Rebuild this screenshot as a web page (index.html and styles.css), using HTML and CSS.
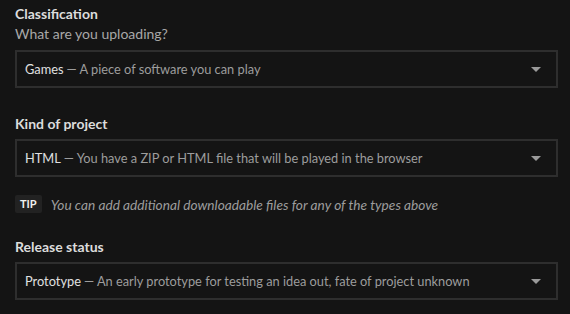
FILE: index.html
```html
<!DOCTYPE html>
<html>

<head>
    <meta name="viewport" content="width=device-width, initial-scale=1">
    <title>Upload project</title>
    <link rel="stylesheet" href="styles.css">
</head>

<body>
    <form class="project_form">
        <div class="input_row">
            <div class="label">Classification</div>
            <div class="sub">What are you uploading?</div>
            <div class="select_box">
                <span class="value">Games</span>
                <span class="desc">— A piece of software you can play</span>
                <span class="arrow"></span>
            </div>
        </div>

        <div class="input_row">
            <div class="label">Kind of project</div>
            <div class="select_box">
                <span class="value">HTML</span>
                <span class="desc">— You have a ZIP or HTML file that will be played in the browser</span>
                <span class="arrow"></span>
            </div>
        </div>

        <p class="tip">
            <span class="tip_badge">TIP</span>
            <em>You can add additional downloadable files for any of the types above</em>
        </p>

        <div class="input_row">
            <div class="label">Release status</div>
            <div class="select_box">
                <span class="value">Prototype</span>
                <span class="desc">— An early prototype for testing an idea out, fate of project unknown</span>
                <span class="arrow"></span>
            </div>
        </div>
    </form>
</body>

</html>
```

FILE: styles.css
```css
body {
    margin: 0;
    background-color: #141414;
    font-family: Lato, 'Noto Sans', sans-serif;
    color: #dadada;
}

.project_form {
    display: flex;
    flex-direction: column;
    padding: 4px 12px 0 15px;
}

.input_row {
    display: flex;
    flex-direction: column;
}

.input_row + .input_row {
    margin-top: 26px;
}

.label {
    font-size: 14px;
    font-weight: bold;
    line-height: 20px;
    color: #dcdcdc;
    margin-bottom: 5px;
}

.sub {
    font-size: 14px;
    line-height: 20px;
    color: #a8a8a8;
    margin-top: -5px;
    margin-bottom: 6px;
}

.select_box {
    display: flex;
    align-items: center;
    height: 34px;
    border: 2px solid #2e2e2e;
    padding: 0 15px 0 8px;
    font-size: 12.8px;
    white-space: nowrap;
}

.select_box .value {
    color: #e0e0e0;
}

.select_box .desc {
    color: #9d9d9d;
    margin-left: 3px;
}

.arrow {
    margin-left: auto;
    width: 0;
    height: 0;
    border-left: 5px solid transparent;
    border-right: 5px solid transparent;
    border-top: 5px solid #9a9a9a;
}

.tip {
    display: flex;
    align-items: center;
    margin: 18px 0 24px;
    font-size: 13.7px;
    color: #9d9d9d;
}

.tip_badge {
    background-color: #222;
    color: #f0f0f0;
    font-size: 11px;
    font-weight: bold;
    line-height: 18px;
    padding: 0 5px;
    border-radius: 2px;
    margin-right: 9px;
}

.tip + .input_row {
    margin-top: 0;
}
```
